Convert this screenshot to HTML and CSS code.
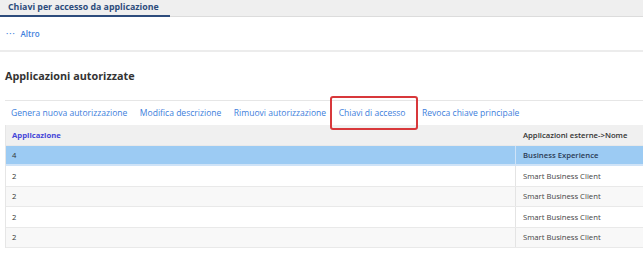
FILE: index.html
```html
<!DOCTYPE html>
<html lang="it">
<head>
<meta charset="utf-8">
<link rel="stylesheet" href="styles.css">
</head>
<body>
<div class="tabbar">
  <div class="tab">Chiavi per accesso da applicazione</div>
</div>
<div class="actions">
  <span class="dots">···</span><span class="altro">Altro</span>
</div>
<div class="section">
  <h1 class="title">Applicazioni autorizzate</h1>
  <div class="toolbar">
    <span class="btn">Genera nuova autorizzazione</span>
    <span class="btn">Modifica descrizione</span>
    <span class="btn">Rimuovi autorizzazione</span>
    <span class="btn hl">Chiavi di accesso</span>
    <span class="btn">Revoca chiave principale</span>
  </div>
  <div class="table">
    <div class="row head"><div class="c1">Applicazione</div><div class="c2">Applicazioni esterne-&gt;Nome</div></div>
    <div class="row sel"><div class="c1">4</div><div class="c2">Business Experience</div></div>
    <div class="row"><div class="c1">2</div><div class="c2">Smart Business Client</div></div>
    <div class="row alt"><div class="c1">2</div><div class="c2">Smart Business Client</div></div>
    <div class="row"><div class="c1">2</div><div class="c2">Smart Business Client</div></div>
    <div class="row alt"><div class="c1">2</div><div class="c2">Smart Business Client</div></div>
  </div>
</div>
</body>
</html>
```

FILE: styles.css
```css
* { box-sizing: border-box; }
body {
  margin: 0;
  background: #fff;
  font-family: "Open Sans", "Noto Sans", sans-serif;
  color: #333;
  overflow: hidden;
}
.tabbar {
  height: 17px;
  background: #efefef;
  border-bottom: 1px solid #dcdcdc;
  display: flex;
}
.tab {
  width: 170px;
  padding: 1px 0 0 8px;
  font-size: 8.8px;
  font-weight: 700;
  color: #2d4c7c;
  border-bottom: 2px solid #2d4c7c;
  height: 17px;
  white-space: nowrap;
}
.actions {
  height: 35px;
  border-bottom: 2px solid #ececec;
  padding: 11px 0 0 6px;
  font-size: 8px;
  font-weight: 600;
  color: #3d7edc;
  display: flex;
  gap: 5px;
}
.dots { letter-spacing: 1px; }
.section { padding: 0 0 0 5px; }
.title {
  margin: 0;
  padding: 16px 0 0 0;
  height: 48px;
  font-size: 10.8px;
  font-weight: 700;
  color: #333;
}
.toolbar {
  border-top: 1px solid #e6e6e6;
  height: 25px;
  display: flex;
  align-items: center;
  padding-left: 6px;
  gap: 12.5px;
  font-size: 8.55px;
  color: #3d7edc;
  white-space: nowrap;
}
.btn { position: relative; }
.hl { margin-right: 4px; }
.hl::before {
  content: "";
  position: absolute;
  left: -9px; right: -13px; top: -11px; bottom: -11px;
  border: 2.5px solid #d8383b;
  border-radius: 3px;
}
.table { border-left: 1px solid #e6e6e6; }
.row {
  display: flex;
  height: 20.4px;
  align-items: center;
  font-size: 7.7px;
  border-bottom: 1px solid #e9e9e9;
}
.c1 { width: 509px; padding-left: 6px; }
.c2 { flex: 1; padding-left: 7px; border-left: 1px solid #e4e4e4; height: 100%; display: flex; align-items: center; color: #444; }
.head { background: #f0f0f0; height: 21px; }
.head .c1 { color: #4646d8; font-weight: 700; }
.head .c2 { color: #333; font-weight: 600; border-left-color: #f0f0f0; }
.sel { background: #9ccbf3; border-bottom: 2px solid #cfe3f7; }
.sel .c2 { font-weight: 600; color: #2a3a55; border-left-color: #cfe3f7; }
.alt { background: #f8f8f8; }
```
